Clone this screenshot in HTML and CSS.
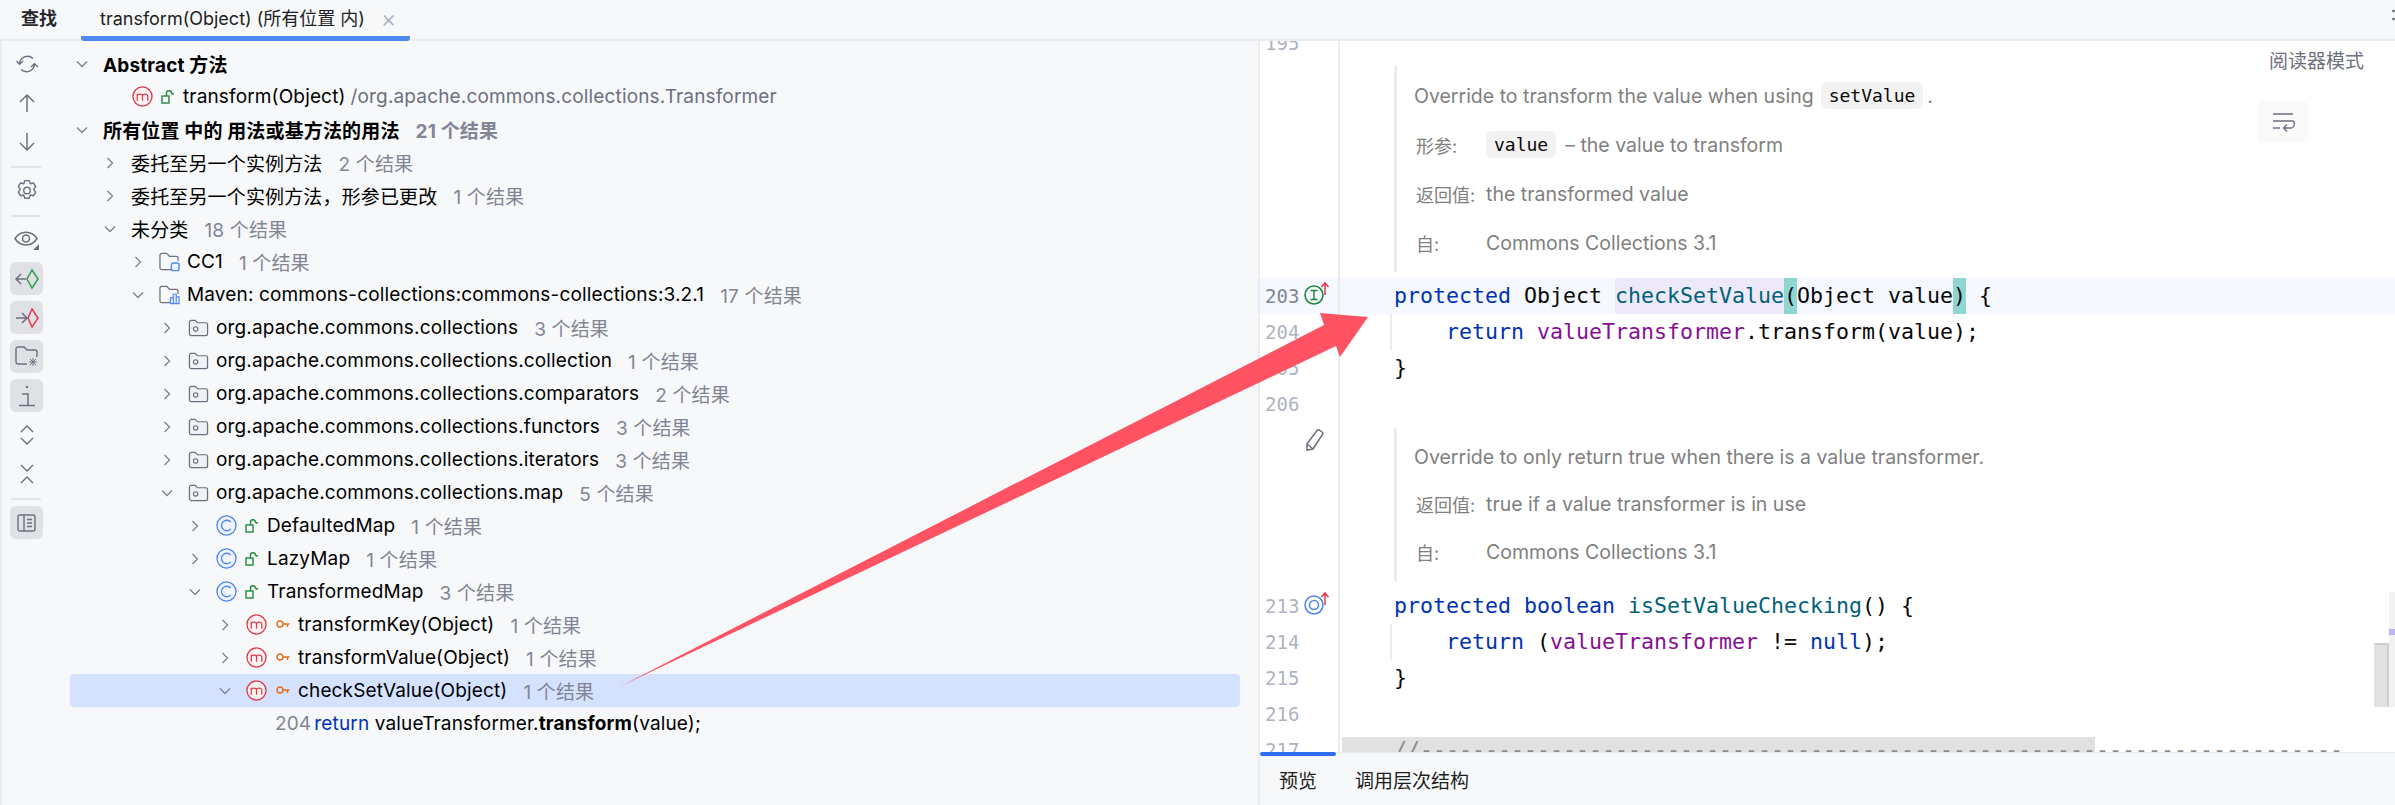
FILE: index.html
```html
<!DOCTYPE html>
<html lang="zh">
<head>
<meta charset="utf-8">
<title>查找</title>
<link rel="stylesheet" href="styles.css">
</head>
<body>
<svg class="defs" aria-hidden="true">
  <symbol id="down" viewBox="0 0 16 16"><path d="M3 5.500l5 5 5-5" fill="none" stroke="#7d818e" stroke-width="1.300"/></symbol>
  <symbol id="right" viewBox="0 0 16 16"><path d="M5.500 3l5 5-5 5" fill="none" stroke="#7d818e" stroke-width="1.300"/></symbol>
  <symbol id="pkg" viewBox="0 0 22 20"><path d="M1.500 4a2 2 0 0 1 2-2h4l2.500 2.500h8.500a2 2 0 0 1 2 2V16a2 2 0 0 1-2 2h-15a2 2 0 0 1-2-2z" fill="#f0f1f5" stroke="#6c707e" stroke-width="1.300"/><circle cx="8" cy="11" r="2.300" fill="none" stroke="#6c707e" stroke-width="1.200"/></symbol>
  <symbol id="cls" viewBox="0 0 22 22"><circle cx="11" cy="11" r="10" fill="#eef3ff" stroke="#4f87f5" stroke-width="1.400"/><path d="M15.500 7.500a5.500 5.500 0 1 0 0 7" fill="none" stroke="#4f87f5" stroke-width="1.400"/></symbol>
  <symbol id="mth" viewBox="0 0 22 22"><circle cx="11" cy="11" r="10" fill="#fff2f3" stroke="#db3b4b" stroke-width="1.400"/><path d="M5.500 15.500V8M5.500 10.500c0-2.800 5.500-2.800 5.500 0v5M11 10.500c0-2.800 5.500-2.800 5.500 0v5" fill="none" stroke="#db3b4b" stroke-width="1.300"/></symbol>
  <symbol id="lock" viewBox="0 0 14 14"><rect x="1" y="6" width="7" height="7" fill="none" stroke="#208a3c" stroke-width="1.400"/><path d="M5.500 6V3.500a2.500 2.500 0 0 1 5-.5c.2 1 2.500 1 2.500 1" fill="none" stroke="#208a3c" stroke-width="1.400"/></symbol>
  <symbol id="key" viewBox="0 0 14 14"><circle cx="4" cy="6" r="3" fill="none" stroke="#e66d17" stroke-width="1.400"/><path d="M7 6H13.500M11.500 6v3" fill="none" stroke="#e66d17" stroke-width="1.400"/></symbol>
</svg>

<header class="topbar">
  <span class="find">查找</span>
  <span class="tab">transform(Object) (所有位置 内)<span class="tab-x">×</span></span>
  <span class="dots"></span>
</header>

<main class="main">
  <nav class="tools">
    <span class="tool"><svg width="24" height="24" viewBox="0 0 24 24" fill="none" stroke="#6c707e" stroke-width="1.400"><path d="M4.500 12A8 8 0 0 1 18 6.500M19.500 12A8 8 0 0 1 6 17.500M1.500 9l3 3.200L8 9M16 15l3.500-3.200L23 15"/></svg></span>
    <span class="tool"><svg width="22" height="22" viewBox="0 0 22 22" fill="none" stroke="#6c707e" stroke-width="1.500"><path d="M11 20V3M4 10l7-7 7 7"/></svg></span>
    <span class="tool"><svg width="22" height="22" viewBox="0 0 22 22" fill="none" stroke="#6c707e" stroke-width="1.500"><path d="M11 2v17M4 12l7 7 7-7"/></svg></span>
    <span class="rule"></span>
    <span class="tool"><svg width="24" height="24" viewBox="0 0 22 22" fill="none" stroke="#6c707e" stroke-width="1.300" stroke-linejoin="round"><path d="M9 1.500h4l1 2.800 3-.6 2 3.300-2 2.500 2 2.500-2 3.300-3-.6-1 2.900H9l-1-2.900-3 .6-2-3.300 2-2.500-2-2.500 2-3.300 3 .6z"/><circle cx="11" cy="10.500" r="3"/></svg></span>
    <span class="rule"></span>
    <span class="tool"><svg width="26" height="22" viewBox="0 0 26 22" fill="none" stroke="#6c707e" stroke-width="1.500"><path d="M1 9.500C6 1 18 1 23 9.500 18 18 6 18 1 9.500z"/><circle cx="12" cy="9.500" r="3.500"/><path d="M25 15v6h-6z" fill="#6c707e" stroke="none"/></svg></span>
    <span class="tool on"><svg width="24" height="22" viewBox="0 0 24 22" fill="none" stroke-width="1.500"><path d="M11 11H1M6 6l-5 5 5 5" stroke="#6c707e"/><path d="M17 2l6 9-6 9-5-9z" stroke="#2f9e4c"/></svg></span>
    <span class="tool on"><svg width="24" height="22" viewBox="0 0 24 22" fill="none" stroke-width="1.500"><path d="M1 11h11M7 6l5 5-5 5" stroke="#6c707e"/><path d="M17 2l6 9-6 9-4-9z" stroke="#e5384d"/></svg></span>
    <span class="tool on"><svg width="24" height="22" viewBox="0 0 24 22" fill="none" stroke="#6c707e" stroke-width="1.400"><path d="M12 18H3a2 2 0 0 1-2-2V3a2 2 0 0 1 2-2h6l3 3h8a2 2 0 0 1 2 2v5"/><path d="M18 12v8M14 16h8M15 13l6 6M21 13l-6 6" stroke-width="1"/></svg></span>
    <span class="tool on"><svg width="20" height="24" viewBox="0 0 20 24" fill="none" stroke="#6c707e" stroke-width="1.500"><circle cx="10" cy="3" r="1.200" fill="#6c707e" stroke="none"/><path d="M5 10h6v11M2 21.500h16"/></svg></span>
    <span class="tool"><svg width="16" height="22" viewBox="0 0 16 22" fill="none" stroke="#6c707e" stroke-width="1.400"><path d="M2 8l6-6 6 6M2 14l6 6 6-6"/></svg></span>
    <span class="tool"><svg width="16" height="22" viewBox="0 0 16 22" fill="none" stroke="#6c707e" stroke-width="1.400"><path d="M2 2l6 6 6-6M2 20l6-6 6 6"/></svg></span>
    <span class="rule"></span>
    <span class="tool on"><svg width="20" height="20" viewBox="0 0 20 20" fill="none" stroke="#6c707e" stroke-width="1.400"><rect x="1" y="2" width="17" height="16" rx="2"/><path d="M7 2v16M10 6.500h5M10 10h5M10 13.500h5"/></svg></span>
  </nav>

  <section class="tree">
    <div class="row l0 bold"><svg class="chev"><use href="#down"/></svg>Abstract 方法</div>
    <div class="row l1 noch"><svg class="ic22"><use href="#mth"/></svg><svg class="ic14"><use href="#lock"/></svg>transform(Object)<span class="path">/org.apache.commons.collections.Transformer</span></div>
    <div class="row l0 bold"><svg class="chev"><use href="#down"/></svg>所有位置 中的 用法或基方法的用法<span class="cnt">21 个结果</span></div>
    <div class="row l1"><svg class="chev"><use href="#right"/></svg>委托至另一个实例方法<span class="cnt">2 个结果</span></div>
    <div class="row l1"><svg class="chev"><use href="#right"/></svg>委托至另一个实例方法，形参已更改<span class="cnt">1 个结果</span></div>
    <div class="row l1"><svg class="chev"><use href="#down"/></svg>未分类<span class="cnt">18 个结果</span></div>
    <div class="row l2"><svg class="chev"><use href="#right"/></svg><svg class="ic-folder" viewBox="0 0 22 20" fill="none"><path d="M13 18H3a2 2 0 0 1-2-2V3a2 2 0 0 1 2-2h5l3 3h7a2 2 0 0 1 2 2v3" stroke="#6c707e" stroke-width="1.300"/><rect x="13" y="11" width="8" height="8" rx="2" fill="#eef3ff" stroke="#4f87f5" stroke-width="1.500"/></svg>CC1<span class="cnt">1 个结果</span></div>
    <div class="row l2"><svg class="chev"><use href="#down"/></svg><svg class="ic-folder" viewBox="0 0 22 20" fill="none"><path d="M12 18H3a2 2 0 0 1-2-2V3a2 2 0 0 1 2-2h5l3 3h7a2 2 0 0 1 2 2v3" stroke="#6c707e" stroke-width="1.300"/><path d="M12 19v-6h3v6zM15 19V9h3v10zM18 19v-7h3v7z" fill="#eef3ff" stroke="#4f87f5" stroke-width="1.200"/></svg>Maven: commons-collections:commons-collections:3.2.1<span class="cnt">17 个结果</span></div>
    <div class="row l3"><svg class="chev"><use href="#right"/></svg><svg class="ic-folder"><use href="#pkg"/></svg>org.apache.commons.collections<span class="cnt">3 个结果</span></div>
    <div class="row l3"><svg class="chev"><use href="#right"/></svg><svg class="ic-folder"><use href="#pkg"/></svg>org.apache.commons.collections.collection<span class="cnt">1 个结果</span></div>
    <div class="row l3"><svg class="chev"><use href="#right"/></svg><svg class="ic-folder"><use href="#pkg"/></svg>org.apache.commons.collections.comparators<span class="cnt">2 个结果</span></div>
    <div class="row l3"><svg class="chev"><use href="#right"/></svg><svg class="ic-folder"><use href="#pkg"/></svg>org.apache.commons.collections.functors<span class="cnt">3 个结果</span></div>
    <div class="row l3"><svg class="chev"><use href="#right"/></svg><svg class="ic-folder"><use href="#pkg"/></svg>org.apache.commons.collections.iterators<span class="cnt">3 个结果</span></div>
    <div class="row l3"><svg class="chev"><use href="#down"/></svg><svg class="ic-folder"><use href="#pkg"/></svg>org.apache.commons.collections.map<span class="cnt">5 个结果</span></div>
    <div class="row l4"><svg class="chev"><use href="#right"/></svg><svg class="ic22"><use href="#cls"/></svg><svg class="ic14"><use href="#lock"/></svg>DefaultedMap<span class="cnt">1 个结果</span></div>
    <div class="row l4"><svg class="chev"><use href="#right"/></svg><svg class="ic22"><use href="#cls"/></svg><svg class="ic14"><use href="#lock"/></svg>LazyMap<span class="cnt">1 个结果</span></div>
    <div class="row l4"><svg class="chev"><use href="#down"/></svg><svg class="ic22"><use href="#cls"/></svg><svg class="ic14"><use href="#lock"/></svg>TransformedMap<span class="cnt">3 个结果</span></div>
    <div class="row l5"><svg class="chev"><use href="#right"/></svg><svg class="ic22"><use href="#mth"/></svg><svg class="ic14 wide"><use href="#key"/></svg>transformKey(Object)<span class="cnt">1 个结果</span></div>
    <div class="row l5"><svg class="chev"><use href="#right"/></svg><svg class="ic22"><use href="#mth"/></svg><svg class="ic14 wide"><use href="#key"/></svg>transformValue(Object)<span class="cnt">1 个结果</span></div>
    <div class="row l5 sel"><svg class="chev"><use href="#down"/></svg><svg class="ic22"><use href="#mth"/></svg><svg class="ic14 wide"><use href="#key"/></svg>checkSetValue(Object)<span class="cnt">1 个结果</span></div>
    <div class="row hit"><span class="hitno">204</span><span class="kw">return</span>&nbsp;valueTransformer.<b>transform</b>(value);</div>
  </section>

  <section class="right">
    <div class="editor">
      <div class="line first"><span class="gut"><span class="num">195</span></span></div>

      <div class="docrow d1">
        <span class="gut"></span>
        <div class="doc">
          <p class="dl">Override to transform the value when using<code class="chip">setValue</code>.</p>
          <p class="dl"><span class="lab">形参:</span><code class="chip first-chip">value</code>– the value to transform</p>
          <p class="dl"><span class="lab">返回值:</span>the transformed value</p>
          <p class="dl"><span class="lab">自:</span>Commons Collections 3.1</p>
        </div>
      </div>

      <div class="line cur"><span class="gut"><span class="num dark">203</span><svg class="mark" width="26" height="26" viewBox="0 0 26 26" fill="none"><circle cx="10" cy="14" r="9" stroke="#208a3c" stroke-width="1.600"/><path d="M6.500 9.500h7M6.500 18.500h7M10 9.500v9" stroke="#208a3c" stroke-width="1.500"/><path d="M21 14V2M17.500 6L21 2l3.500 4" stroke="#e5384d" stroke-width="1.500"/></svg></span><span class="code">    <span class="kw">protected</span> Object <span class="word"><span class="fn">checkSetValue</span></span><span class="br">(</span>Object value<span class="br">)</span> {</span></div>
      <div class="line"><span class="gut"><span class="num">204</span></span><span class="code guide">        <span class="kw">return</span> <span class="fld">valueTransformer</span>.transform(value);</span></div>
      <div class="line"><span class="gut"><span class="num">205</span></span><span class="code">    }</span></div>
      <div class="line"><span class="gut"><span class="num">206</span></span><span class="code"></span></div>

      <div class="docrow d2">
        <span class="gut"><svg class="pencil" width="22" height="24" viewBox="0 0 22 24" fill="none" stroke="#6c707e" stroke-width="1.500"><path d="M3 16L13 2.500a2 2 0 0 1 3 0l2 1.500a2 2 0 0 1 .3 2.800L9 21l-6 1zM3 16l6 5"/></svg></span>
        <div class="doc">
          <p class="dl">Override to only return true when there is a value transformer.</p>
          <p class="dl"><span class="lab">返回值:</span>true if a value transformer is in use</p>
          <p class="dl"><span class="lab">自:</span>Commons Collections 3.1</p>
        </div>
      </div>

      <div class="line"><span class="gut"><span class="num">213</span><svg class="mark" width="26" height="26" viewBox="0 0 26 26" fill="none"><circle cx="10" cy="14" r="9" stroke="#4f87f5" stroke-width="1.600"/><circle cx="10" cy="14" r="4.500" stroke="#4f87f5" stroke-width="1.600"/><path d="M21 14V2M17.500 6L21 2l3.500 4" stroke="#e5384d" stroke-width="1.500"/></svg></span><span class="code">    <span class="kw">protected boolean</span> <span class="fn">isSetValueChecking</span>() {</span></div>
      <div class="line"><span class="gut"><span class="num">214</span></span><span class="code guide">        <span class="kw">return</span> (<span class="fld">valueTransformer</span> != <span class="kw">null</span>);</span></div>
      <div class="line"><span class="gut"><span class="num">215</span></span><span class="code">    }</span></div>
      <div class="line"><span class="gut"><span class="num">216</span></span><span class="code"></span></div>
      <div class="line"><span class="gut"><span class="num">217</span></span><span class="code fold">    <span class="cmt">//-----------------------------------------------------------------------</span></span></div>

      <div class="reader">阅读器模式</div>
      <div class="wrapbtn"><svg width="24" height="20" viewBox="0 0 24 20" fill="none" stroke="#6c707e" stroke-width="1.400"><path d="M2 2h20M2 9h20c2 0 2 7-2 7h-7M16 12.500L12.500 16l3.500 3.500M2 16h7"/></svg></div>
      <div class="track"><span class="tick"></span></div>
      <div class="thumb"></div>
    </div>
    <footer class="bottom">
      <span class="btab active">预览</span>
      <span class="btab">调用层次结构</span>
    </footer>
  </section>
</main>

<svg class="arrow" width="2395" height="805" aria-hidden="true"><polygon points="619,687 1324,325 1320,313 1368,317 1340,357 1336,346" fill="#ff5364"/></svg>
</body>
</html>
```

FILE: styles.css
```css
* { box-sizing: border-box; }
html, body { margin: 0; height: 100%; }
body {
  width: 2395px;
  height: 805px;
  overflow: hidden;
  position: relative;
  background: #f7f8fa;
  color: #000;
  font-family: Inter, "Noto Sans CJK SC", sans-serif;
  font-size: 19px;
  display: flex;
  flex-direction: column;
}
.defs { width: 0; height: 0; position: absolute; }

.topbar {
  height: 41px;
  flex: none;
  display: flex;
  align-items: flex-start;
  border-bottom: 2px solid #ebecf0;
  padding-left: 21px;
  position: relative;
}
.find { font-size: 18px; font-weight: 700; line-height: 37px; color: #27282e; width: 60px; }
.tab {
  font-size: 18px;
  line-height: 37px;
  height: 41px;
  width: 329px;
  padding-left: 19px;
  border-bottom: 5px solid #4f87f5;
  border-radius: 0 0 3px 3px;
  color: #1e1f22;
  display: flex;
}
.tab-x { margin-left: 16px; font-size: 24px; color: #a8adbd; font-weight: 300; }
.dots {
  position: absolute;
  left: 2392px;
  top: 7px;
  width: 3px;
  height: 18px;
  background: radial-gradient(circle, #818594 1.400px, transparent 1.600px) 0 0 / 3px 8px;
}

.main { flex: 1; display: flex; min-height: 0; }

.tools {
  width: 70px;
  flex: none;
  display: flex;
  flex-direction: column;
  align-items: flex-start;
  padding: 6px 0 0 8px;
  border-left: 2px solid #ebecf0;
  gap: 6px;
}
.tool {
  width: 33px;
  height: 33px;
  border-radius: 6px;
  display: flex;
  align-items: center;
  justify-content: center;
  flex: none;
}
.tool.on { background: #dfe1e5; }
.rule { width: 30px; height: 2px; margin: 2px 0 0 1px; background: #e3e4e8; flex: none; }

.tree { width: 1188px; flex: none; padding: 6px 18px 0 0; letter-spacing: .15px; }
.row {
  height: 33px;
  display: flex;
  align-items: center;
  white-space: nowrap;
  border-radius: 4px;
}
.bold { font-weight: 700; }
.l0 { padding-left: 4px; }
.l1 { padding-left: 32px; }
.l2 { padding-left: 60px; }
.l3 { padding-left: 89px; }
.l4 { padding-left: 117px; }
.l5 { padding-left: 147px; }
.sel { background: #d4e2ff; }
.chev { width: 16px; height: 16px; margin-right: 13px; flex: none; }
.noch { padding-left: 62px; }
.ic22 { width: 21px; height: 21px; flex: none; }
.ic14 { width: 14px; height: 14px; margin: 0 8px 0 8px; flex: none; }
.ic14.wide { margin: 0 8px 0 9px; }
.ic-folder { width: 21px; height: 20px; margin-right: 7px; flex: none; }
.path { color: #6c707e; margin-left: 5px; }
.cnt { color: #818594; margin-left: 16px; }
.bold .cnt { font-weight: 700; }
.hit { padding-left: 205px; }
.hitno { color: #818594; margin-right: 3px; }
.kw { color: #0033b3; }

.right { flex: 1; display: flex; flex-direction: column; min-width: 0; border-left: 2px solid #ebecf0; }
.editor { height: 711px; background: #fff; overflow: hidden; position: relative; flex: none; }
.line { height: 36px; display: flex; }
.line.first { margin-top: -16px; }
.line.cur { background: #f5f8fe; }
.gut {
  width: 80px;
  flex: none;
  border-right: 2px solid #ebecf0;
  display: flex;
  position: relative;
}
.num {
  font-family: "DejaVu Sans Mono", monospace;
  font-size: 19px;
  line-height: 36px;
  color: #aeb3c2;
  padding-left: 5px;
}
.num.dark { color: #818594; }
.mark { position: absolute; left: 44px; top: 3px; }
.code {
  font-family: "DejaVu Sans Mono", monospace;
  font-size: 21.600px;
  line-height: 36px;
  white-space: pre;
  padding-left: 2px;
  color: #080808;
  position: relative;
  flex: 1;
}
.guide::before {
  content: "";
  position: absolute;
  left: 50px;
  top: 0;
  width: 2px;
  height: 36px;
  background: #ebecf0;
}
.word { background: #ede9f9; display: inline-block; }
.br { background: #8fd6d2; display: inline-block; }
.fn { color: #00627a; }
.fld { color: #871094; }
.cmt { color: #8c8c8c; }
.fold {
  background: linear-gradient(#e1e1e1, #e1e1e1) 2px 5px / 753px 100% no-repeat;
}

.docrow { display: flex; }
.d1 { height: 217px; }
.d2 { height: 166px; }
.pencil { position: absolute; left: 44px; top: 6px; }
.doc {
  flex: 1;
  margin: 5px 0 6px 54px;
  border-left: 3px solid #ebecf0;
  padding-left: 17px;
  display: flex;
  flex-direction: column;
  color: #808080;
  font-size: 19.500px;
}
.d1 .doc { padding-top: 5px; }
.d1 .dl { height: 49px; }
.d2 .doc { padding-top: 5px; margin-top: 6px; margin-bottom: 7px; }
.d2 .dl { height: 47.500px; }
.dl { margin: 0; display: flex; align-items: center; white-space: nowrap; }
.lab { width: 72px; padding-left: 2px; flex: none; font-size: 18px; }
.chip {
  font-family: "DejaVu Sans Mono", monospace;
  font-size: 18px;
  background: #f2f2f2;
  color: #080808;
  border-radius: 6px;
  padding: 3px 8px;
  margin: 0 4px 0 7px;
}
.first-chip { margin-left: 0; margin-right: 9px; }

.reader { position: absolute; left: 1009px; top: 8px; color: #6c707e; font-size: 19px; line-height: 26px; }
.wrapbtn {
  position: absolute;
  left: 997px;
  top: 60px;
  width: 51px;
  height: 42px;
  border-radius: 5px;
  background: #fafafa;
  display: flex;
  align-items: center;
  justify-content: center;
}
.track { position: absolute; left: 1129px; top: 551px; width: 6px; height: 115px; background: #f2f2f2; }
.tick { display: block; margin-top: 37px; height: 6px; background: #c0b4f0; }
.thumb {
  position: absolute;
  left: 1114px;
  top: 602px;
  width: 15px;
  height: 64px;
  background: #e1e1e1;
  border: 2px solid #e1e1e1;
  border-right-color: #cfcfcf;
  border-top-color: #cfcfcf;
}

.bottom {
  flex: 1;
  border-top: 1px solid #ebecf0;
  display: flex;
  padding-left: 0;
  font-size: 19px;
  color: #1e1f22;
}
.btab { height: 52px; line-height: 58px; padding: 0 19px; position: relative; }
.btab.active::before {
  content: "";
  position: absolute;
  left: 0;
  right: 0;
  top: -1px;
  height: 4px;
  background: #2f6fed;
  border-radius: 2px;
}

.arrow { position: absolute; left: 0; top: 0; pointer-events: none; }
```
